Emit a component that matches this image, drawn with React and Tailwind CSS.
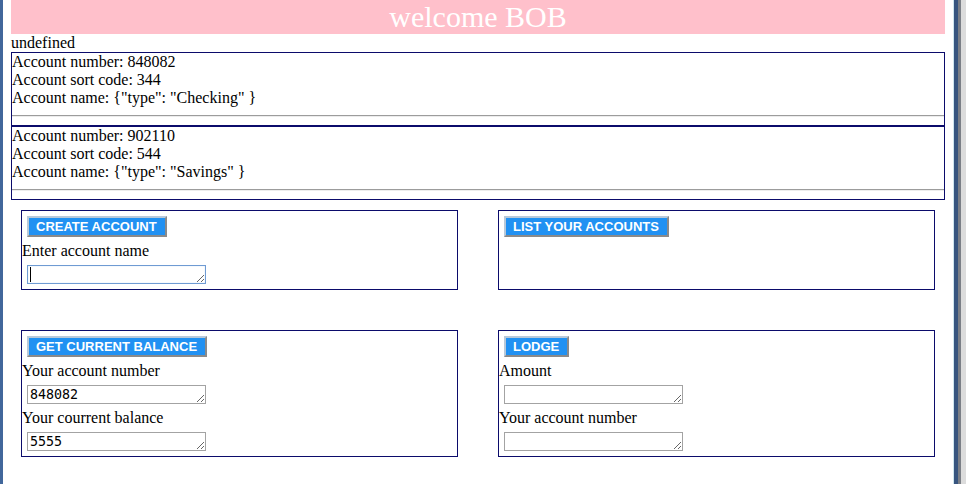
import React from "react";

function Btn({ children }) {
  return (
    <button
      className="ml-[5px] mt-[5px] h-[21px] pl-[7px] pr-[8px] border-2 border-t-[#b9c9d9] border-l-[#b9c9d9] border-r-[#8a8a8a] border-b-[#8a8a8a] bg-[#2191f2] text-white text-[13px] leading-[17px] font-bold uppercase"
      style={{ fontFamily: '"Liberation Sans", Arial, sans-serif' }}
    >
      {children}
    </button>
  );
}

function Label({ children }) {
  return <div className="mt-[5px] text-[16px] leading-[18px] text-black">{children}</div>;
}

function Area({ value = "", focused = false }) {
  return (
    <div className="relative ml-[5px] mt-[5px] mb-[5px] w-[179px] h-[19px]">
      <textarea
        readOnly
        rows={1}
        value={value}
        className={
          "block w-[179px] h-[19px] px-[2px] py-0 text-[13.333px] leading-[17px] text-black overflow-hidden border " +
          (focused ? "border-[#6f9bd3] shadow-[inset_0_0_1px_#9dbde6]" : "border-[#a3a3a3]")
        }
        style={{ fontFamily: '"DejaVu Sans Mono", monospace', resize: "both", outline: "none" }}
      />
      {focused && <span className="absolute left-[3px] top-[2px] w-[1px] h-[15px] bg-black" />}
    </div>
  );
}

function Account({ number, sort, type }) {
  return (
    <div className="border border-[#0b0b6b]">
      <div className="text-[16px] leading-[18px]">Account number: {number}</div>
      <div className="text-[16px] leading-[18px]">Account sort code: {sort}</div>
      <div className="text-[16px] leading-[18px]">Account name: {'{"type": "' + type + '" }'}</div>
      <div className="my-[8px] h-[2px] border-t border-t-[#9c9c9c] border-b border-b-[#ececec]" />
    </div>
  );
}

function Card({ children }) {
  return (
    <div className="w-[437px] border border-[#0b0b6b] flex flex-col items-start">{children}</div>
  );
}

export default function App() {
  return (
    <div
      className="flex h-[484px] w-[966px] overflow-hidden bg-white text-black"
      style={{ fontFamily: '"Liberation Serif", "Times New Roman", serif' }}
    >
      <div className="w-[3px] shrink-0 bg-[#41679b]" />
      <div className="w-[950px] shrink-0 px-[8px]">
        <div className="h-[34px] bg-[#ffc0cb] text-white text-[30px] leading-[34px] text-center">
          welcome BOB
        </div>
        <div className="text-[16px] leading-[18px]">undefined</div>
        <Account number="848082" sort="344" type="Checking" />
        <Account number="902110" sort="544" type="Savings" />
        <div className="mt-[10px] px-[10px] flex flex-wrap gap-x-[40px] gap-y-[40px]">
          <Card>
            <Btn>Create account</Btn>
            <Label>Enter account name</Label>
            <Area focused />
          </Card>
          <Card>
            <Btn>List your accounts</Btn>
          </Card>
          <Card>
            <Btn>Get current balance</Btn>
            <Label>Your account number</Label>
            <Area value="848082" />
            <div className="-mt-[5px]">
              <Label>Your courrent balance</Label>
            </div>
            <Area value="5555" />
          </Card>
          <Card>
            <Btn>Lodge</Btn>
            <Label>Amount</Label>
            <Area />
            <div className="-mt-[5px]">
              <Label>Your account number</Label>
            </div>
            <Area />
          </Card>
        </div>
      </div>
      <div className="flex shrink-0">
        <div className="w-[1px] bg-[#cfe6ee]" />
        <div className="w-[4px] bg-[#38557f]" />
        <div className="w-[3px] bg-[#7b7f86]" />
        <div className="w-[5px] bg-[#dcdcdc]" />
      </div>
    </div>
  );
}
